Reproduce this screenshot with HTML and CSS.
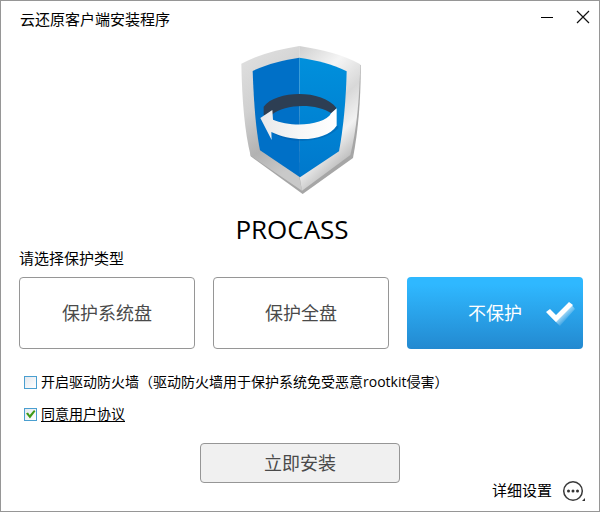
FILE: index.html
```html
<!DOCTYPE html>
<html lang="zh-CN">
<head>
    <meta charset="UTF-8">
    <meta name="viewport" content="width=device-width, initial-scale=1.0">
    <title>云还原客户端安装程序</title>
    <link rel="stylesheet" href="styles.css">
</head>
<body>

<form class="window">
    <header class="titlebar">
        <h1 class="title">云还原客户端安装程序</h1>
        <button type="button" class="win-button" aria-label="最小化">
            <svg width="14" height="14" viewBox="0 0 14 14"><path d="M1 7.5H13" stroke="#000" fill="none"/></svg>
        </button>
        <button type="button" class="win-button" aria-label="关闭">
            <svg width="14" height="14" viewBox="0 0 14 14"><path d="M1 1L13 13M13 1L1 13" stroke="#111" stroke-width="1.2" fill="none"/></svg>
        </button>
    </header>

    <div class="brand">
        <svg class="logo" viewBox="30 30 366 450" aria-hidden="true">
            <defs>
                <linearGradient id="rim-left" x1="0" y1="0" x2="0.3" y2="1">
                    <stop offset="0" stop-color="#e2e2e2"/>
                    <stop offset="0.45" stop-color="#d0d0d0"/>
                    <stop offset="0.75" stop-color="#b2b2b2"/>
                    <stop offset="1" stop-color="#c9c9c9"/>
                </linearGradient>
                <linearGradient id="rim-right" x1="0" y1="0" x2="0.4" y2="1">
                    <stop offset="0" stop-color="#cfcfcf"/>
                    <stop offset="0.3" stop-color="#f5f5f5"/>
                    <stop offset="0.55" stop-color="#d8d8d8"/>
                    <stop offset="0.75" stop-color="#f2f2f2"/>
                    <stop offset="1" stop-color="#b0b0b0"/>
                </linearGradient>
                <linearGradient id="face-right" x1="0" y1="0" x2="0" y2="1">
                    <stop offset="0" stop-color="#0090dc"/>
                    <stop offset="1" stop-color="#0078cc"/>
                </linearGradient>
                <linearGradient id="band" x1="0" y1="0" x2="1" y2="0">
                    <stop offset="0" stop-color="#e8e8ea"/>
                    <stop offset="0.5" stop-color="#f6f6f6"/>
                    <stop offset="1" stop-color="#fff"/>
                </linearGradient>
            </defs>
            <!-- metal rim -->
            <path fill="#a6a6a6" d="M62 364L218 477L369 369C386 280 393 180 392 90L350 90L60 340Z"/>
            <path fill="url(#rim-left)" d="M208 33C144 44 85 58 34 86C36 196 44 290 62 362L216 467L208 427Z"/>
            <path fill="url(#rim-right)" d="M208 33C276 44 337 58 391 88C388 190 381 280 361 360L216 467L208 420Z"/>
            <!-- face -->
            <path fill="#0070c7" d="M208 68C160 76 112 86 68 108C71 196 77 280 90 346L210 427Z"/>
            <path fill="url(#face-right)" d="M208 68C260 76 307 86 350 109C348 196 340 280 327 349L210 427Z"/>
            <!-- ring arrow -->
            <path fill="#2d3e53" d="M101 240V215C140 165 278 163 320 220L304 235C265 206 165 204 125 240Z"/>
            <path fill="#00529c" opacity="0.35" d="M132 296C180 328 280 326 325 280V272L125 290Z"/>
            <path fill="url(#band)" d="M91 249L127 225L129 254C180 277 284 273 304 234L320 220V272C288 320 188 323 124 291L125 315Z"/>
        </svg>
        <p class="brand-name">PROCASS</p>
    </div>

    <fieldset class="modes">
        <legend class="modes-title">请选择保护类型</legend>
        <div class="mode-list">
            <label class="mode">
                <input type="radio" name="mode" value="system">
                <span>保护系统盘</span>
            </label>
            <label class="mode">
                <input type="radio" name="mode" value="all">
                <span>保护全盘</span>
            </label>
            <label class="mode mode-active">
                <input type="radio" name="mode" value="none" checked>
                <span>不保护</span>
                <svg class="mode-tick" width="32" height="28" viewBox="0 0 32 28" aria-hidden="true">
                    <defs>
                        <linearGradient id="tick-shade" gradientUnits="userSpaceOnUse" x1="16" y1="13" x2="22" y2="19">
                            <stop offset="0" stop-color="#fff" stop-opacity="0.7"/>
                            <stop offset="1" stop-color="#fff" stop-opacity="0.05"/>
                        </linearGradient>
                    </defs>
                    <path fill="url(#tick-shade)" d="M2 12L11 20L26 3L30 8L15 25Z"/>
                    <path fill="#fff" d="M1 11L5 8L11 14L24 1L28 4L11 21Z"/>
                </svg>
            </label>
        </div>
    </fieldset>

    <div class="options">
        <div class="option">
            <input type="checkbox" id="firewall">
            <label for="firewall">开启驱动防火墙（驱动防火墙用于保护系统免受恶意rootkit侵害）</label>
        </div>
        <div class="option">
            <input type="checkbox" id="agree" aria-labelledby="agreement" checked>
            <a id="agreement" href="#agreement">同意用户协议</a>
        </div>
    </div>

    <footer class="footer">
        <button type="submit" class="install">立即安装</button>
        <button type="button" class="settings">
            <span>详细设置</span>
            <svg width="24" height="22" viewBox="0 0 24 22" aria-hidden="true">
                <circle cx="11" cy="11" r="9.3" fill="none" stroke="#3a3a3a" stroke-width="1.5"/>
                <circle cx="6.5" cy="11" r="1.5" fill="#333"/>
                <circle cx="11" cy="11" r="1.5" fill="#333"/>
                <circle cx="15.5" cy="11" r="1.5" fill="#333"/>
                <path d="M23 18V21H20Z" fill="#333"/>
            </svg>
        </button>
    </footer>
</form>

</body>
</html>
```

FILE: styles.css
```css
* { box-sizing: border-box; }
body {
    margin: 0;
    background: #fff;
    color: #000;
    font-family: "Open Sans", "Noto Sans CJK SC", sans-serif;
    font-size: 15px;
    line-height: 20px;
}
button {
    padding: 0;
    border: none;
    background: none;
    color: inherit;
    font: inherit;
    cursor: pointer;
}
svg { display: block; }
.window {
    display: flex;
    flex-direction: column;
    min-height: 100vh;
    border: 1px solid #969696;
}
.titlebar {
    display: flex;
    align-items: flex-start;
    gap: 22px;
    padding: 8px 9px 0 19px;
}
.title {
    flex: 1;
    margin: 0;
    font-size: 15px;
    font-weight: normal;
}
.win-button { height: 16px; }
.brand {
    display: flex;
    flex-direction: column;
    align-items: center;
    padding: 16px 0 0 2px;
}
.logo { width: 122px; height: 150px; }
.brand-name {
    margin: 19px 0 0;
    padding-right: 18px;
    font-size: 26px;
    line-height: 30px;
}
.modes {
    min-width: 0;
    margin: 4px 0 0;
    padding: 0 16px 0 18px;
    border: none;
}
.modes-title { padding: 0; margin-bottom: 9px; }
.mode-list {
    display: grid;
    grid-template-columns: repeat(3, 1fr);
    gap: 18px;
}
.mode {
    position: relative;
    display: flex;
    align-items: center;
    justify-content: center;
    height: 72px;
    border: 1px solid #969696;
    border-radius: 4px;
    color: #4a4a4a;
    font-size: 18px;
    cursor: pointer;
}
.mode input {
    position: absolute;
    inset: 0;
    width: 100%;
    height: 100%;
    margin: 0;
    opacity: 0;
    cursor: pointer;
}
.mode-active {
    border: none;
    background: linear-gradient(#2fb8ff 10%, #2389d0);
    color: #fff;
}
.mode-tick {
    position: absolute;
    right: 6px;
    top: 24px;
}
.options {
    display: flex;
    flex-direction: column;
    gap: 12px;
    padding: 23px 23px 0;
    font-size: 14px;
}
.option {
    display: flex;
    align-items: center;
    gap: 4px;
}
.option a { color: #000; text-underline-offset: 2px; }
.option input {
    appearance: none;
    flex: none;
    width: 13px;
    height: 13px;
    margin: 0;
    border: 1px solid #4a9fd0;
    background: linear-gradient(135deg, #e4e8ee, #fff);
}
.option input:checked::before {
    content: "";
    display: block;
    width: 11px;
    height: 11px;
    background: #3f9a17;
    clip-path: polygon(9% 45%, 27% 36%, 43% 60%, 82% 13%, 95% 26%, 45% 92%);
}
.footer {
    display: grid;
    grid-template-columns: 1fr 200px 1fr;
    flex: 1;
    padding: 19px 0 9px;
}
.install {
    grid-column: 2;
    height: 40px;
    border: 1px solid #969696;
    border-radius: 4px;
    background: #f0f0f0;
    color: #4a4a4a;
    font-size: 18px;
}
.settings {
    display: flex;
    align-self: end;
    justify-self: end;
    align-items: flex-start;
    gap: 10px;
    margin-right: 13px;
}
```
